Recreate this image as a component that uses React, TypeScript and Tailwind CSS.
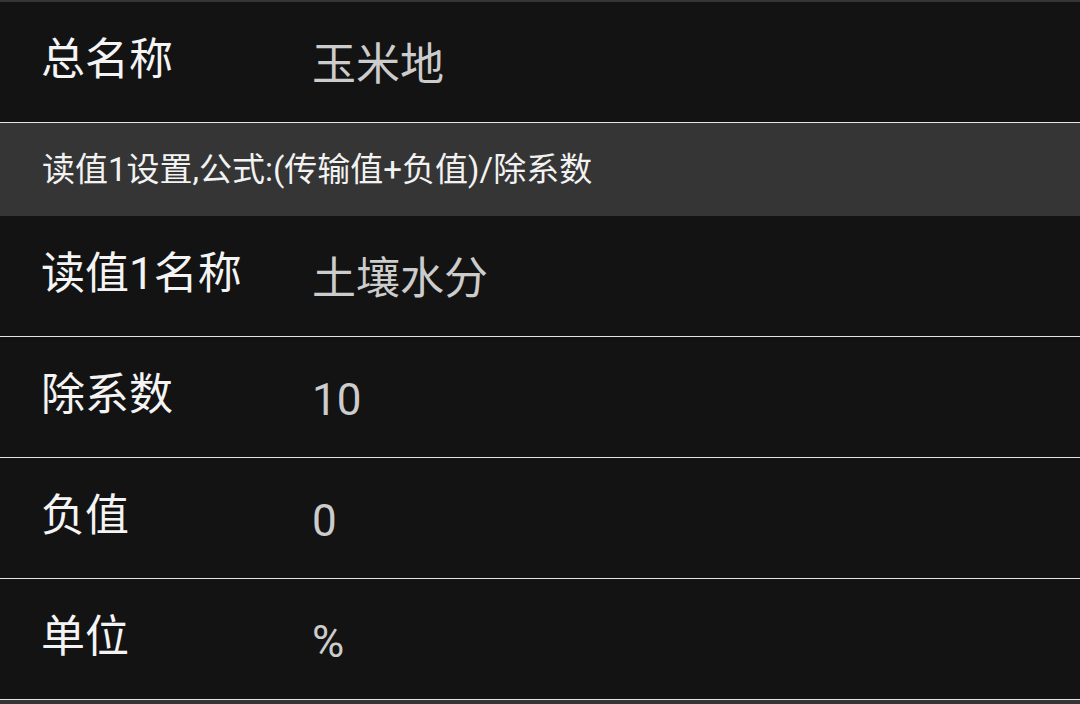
import React from "react";

interface RowProps {
  label: string;
  value: string;
}

const font = { fontFamily: 'Roboto, "Noto Sans CJK SC", sans-serif' };

const Row: React.FC<RowProps> = ({ label, value }) => (
  <div className="flex h-[121px] items-center border-b border-[#e4e4e4] bg-[#131313] pl-[41px]">
    <div className="w-[271px] text-[44px] leading-none text-[#f4f4f4] -translate-y-[2px]">{label}</div>
    <div className="text-[44px] leading-none text-[#cccccc] translate-y-[3px]">{value}</div>
  </div>
);

export default function App() {
  return (
    <div className="h-[704px] w-[1080px] overflow-hidden bg-[#353535] pt-[2px]" style={font}>
      <Row label="总名称" value="玉米地" />
      {/* section header */}
      <div className="flex h-[93px] items-center bg-[#353535] pl-[42px] text-[33px] leading-none text-[#f2f2f2]">
        读值1设置,公式:(传输值+负值)/除系数
      </div>
      <Row label="读值1名称" value="土壤水分" />
      <Row label="除系数" value="10" />
      <Row label="负值" value="0" />
      <Row label="单位" value="%" />
    </div>
  );
}
